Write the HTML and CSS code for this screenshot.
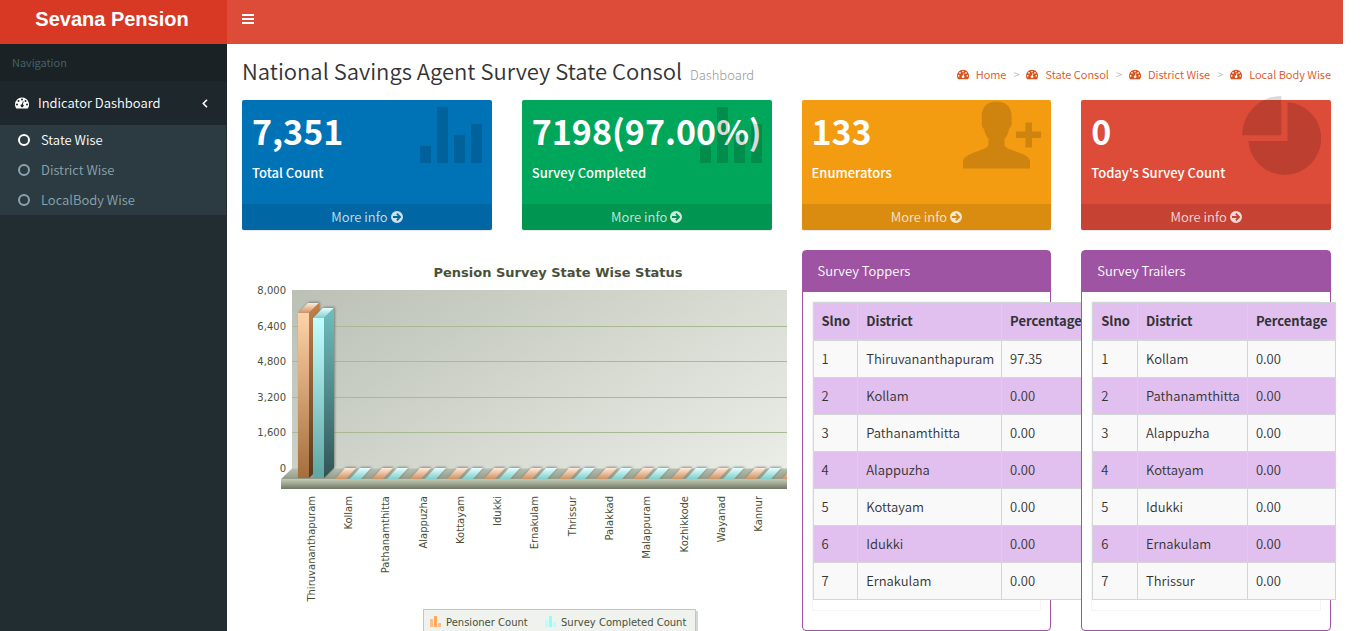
FILE: index.html
```html
<!DOCTYPE html>
<html lang="en">
<head>
<meta charset="utf-8">
<title>Sevana Pension</title>
<link rel="stylesheet" href="styles.css">
</head>
<body>
<svg class="defs" width="0" height="0" aria-hidden="true">
  <symbol id="gauge" viewBox="0 0 14 12"><path fill-rule="evenodd" d="M7 .5a7 7 0 0 0-7 7c0 1.400.4 2.700 1.100 3.800.1.200.2.200.4.200h11c.2 0 .3 0 .4-.2A7 7 0 0 0 7 .5zM2 6.500a1 1 0 1 1 0 2 1 1 0 0 1 0-2zM3.500 3a1 1 0 1 1 0 2 1 1 0 0 1 0-2zM7 1.500a1 1 0 1 1 0 2 1 1 0 0 1 0-2zM10.500 3a1 1 0 1 1 0 2 1 1 0 0 1 0-2zM12 6.500a1 1 0 1 1 0 2 1 1 0 0 1 0-2zM7.900 4.200l.8.2-.8 3a1.500 1.500 0 1 1-.9-.2z"/></symbol>
  <symbol id="ring" viewBox="0 0 12 12"><circle cx="6" cy="6" r="5" fill="none" stroke="currentColor" stroke-width="2"/></symbol>
  <symbol id="go" viewBox="0 0 12 12"><path fill-rule="evenodd" d="M6 0a6 6 0 1 1 0 12A6 6 0 0 1 6 0zM5.200 3.200l1.700 1.800H2v2h4.900L5.200 8.800l1.300 1.200L10.300 6 6.500 2z"/></symbol>
  <symbol id="bars" viewBox="0 0 62 56"><path d="M0 39h11v17H0zM17 0h11v56H17zM34 28h11v28H34zM51 17h11v39H51z"/></symbol>
</svg>

<header class="topbar">
  <a class="brand" href="#">Sevana Pension</a>
  <button class="toggle" type="button" aria-label="Toggle navigation"><svg width="12" height="10" viewBox="0 0 12 10"><path d="M0 0h12v2H0zM0 4h12v2H0zM0 8h12v2H0z"/></svg></button>
</header>

<div class="shell">
  <nav class="sidebar">
    <div class="nav-title">Navigation</div>
    <a class="nav-parent" href="#"><svg width="14" height="12"><use href="#gauge"/></svg><span>Indicator Dashboard</span><svg class="chevron" width="6" height="9" viewBox="0 0 6 9"><path d="M5 .7L1.300 4.500 5 8.300" fill="none" stroke="currentColor" stroke-width="1.600"/></svg></a>
    <ul class="nav-list">
      <li><a class="current" href="#"><svg width="12" height="12"><use href="#ring"/></svg>State Wise</a></li>
      <li><a href="#"><svg width="12" height="12"><use href="#ring"/></svg>District Wise</a></li>
      <li><a href="#"><svg width="12" height="12"><use href="#ring"/></svg>LocalBody Wise</a></li>
    </ul>
  </nav>

  <main class="content">
    <div class="heading">
      <h1>National Savings Agent Survey State Consol <small>Dashboard</small></h1>
      <ol class="crumbs">
        <li><a href="#"><svg width="12" height="11"><use href="#gauge"/></svg>Home</a></li>
        <li><a href="#"><svg width="12" height="11"><use href="#gauge"/></svg>State Consol</a></li>
        <li><a href="#"><svg width="12" height="11"><use href="#gauge"/></svg>District Wise</a></li>
        <li><a href="#"><svg width="12" height="11"><use href="#gauge"/></svg>Local Body Wise</a></li>
      </ol>
    </div>

    <div class="grid">
      <section class="tile blue">
        <div class="tile-body"><h3>7,351</h3><p>Total Count</p></div>
        <svg class="tile-icon" width="62" height="56"><use href="#bars"/></svg>
        <a href="#">More info <svg width="12" height="12"><use href="#go"/></svg></a>
      </section>
      <section class="tile green">
        <div class="tile-body"><h3>7198(97.00%)</h3><p>Survey Completed</p></div>
        <svg class="tile-icon" width="62" height="56"><use href="#bars"/></svg>
        <a href="#">More info <svg width="12" height="12"><use href="#go"/></svg></a>
      </section>
      <section class="tile orange">
        <div class="tile-body"><h3>133</h3><p>Enumerators</p></div>
        <svg class="tile-icon person" width="78" height="68" viewBox="0 0 78 68"><path d="M0 67.500V60c1-4 5-6 11-8.500 8-3 14-4.500 14.500-7.500v-6c-2.500-3-4-6.500-4.500-10-2-1.500-2.500-4-2.500-6 0-1 .5-1.500.5-2C17 6 24 .5 33.500.5S50 6 48.500 20c1 3 0 6-2.500 8-.5 4-2 7.500-4.500 10v6c.5 3 6 4.500 14 7.500 7 2.500 11 4.500 11.500 8.500v7.500zM53 30.500V37h9.500v9.500H69V37h9v-6.500h-9V21.500h-6.500v9z"/></svg>
        <a href="#">More info <svg width="12" height="12"><use href="#go"/></svg></a>
      </section>
      <section class="tile red">
        <div class="tile-body"><h3>0</h3><p>Today's Survey Count</p></div>
        <svg class="tile-icon pie" width="79" height="79" viewBox="0 0 79 79"><path d="M0 39.200A39 39 0 0 1 39.300 0v39.200zM45.500 6A36.500 36.500 0 1 1 6.300 45h39.200z"/></svg>
        <a href="#">More info <svg width="12" height="12"><use href="#go"/></svg></a>
      </section>

      <figure class="chart">
        <svg width="600" height="396" viewBox="242 250 600 396" role="img" aria-label="Pension Survey State Wise Status">
          <defs>
            <linearGradient id="wall" gradientUnits="userSpaceOnUse" x1="330" y1="260" x2="610" y2="700"><stop offset="0" stop-color="#bac0b5"/><stop offset="1" stop-color="#f6f8f2"/></linearGradient>
            <linearGradient id="floor" x1="0" y1="0" x2="0" y2="1"><stop offset="0" stop-color="#b9bfb1"/><stop offset="1" stop-color="#939b86"/></linearGradient>
            <linearGradient id="slab" x1="0" y1="0" x2="0" y2="1"><stop offset="0" stop-color="#c5cbb9"/><stop offset=".5" stop-color="#9ca38e"/><stop offset="1" stop-color="#6f7662"/></linearGradient>
            <linearGradient id="o-front" x1="0" y1="0" x2="0" y2="1"><stop offset="0" stop-color="#ffd2a8"/><stop offset="1" stop-color="#a56d3b"/></linearGradient>
            <linearGradient id="o-side" x1="0" y1="0" x2="0" y2="1"><stop offset="0" stop-color="#c1814a"/><stop offset="1" stop-color="#563a22"/></linearGradient>
            <linearGradient id="o-top" x1="0" y1="0" x2="0" y2="1"><stop offset="0" stop-color="#ffeadb"/><stop offset="1" stop-color="#cf9262"/></linearGradient>
            <linearGradient id="t-front" x1="0" y1="0" x2="0" y2="1"><stop offset="0" stop-color="#c2ffff"/><stop offset="1" stop-color="#5ea6a3"/></linearGradient>
            <linearGradient id="t-side" x1="0" y1="0" x2="0" y2="1"><stop offset="0" stop-color="#6fbfbe"/><stop offset="1" stop-color="#315455"/></linearGradient>
            <linearGradient id="t-top" x1="0" y1="0" x2="0" y2="1"><stop offset="0" stop-color="#e6ffff"/><stop offset="1" stop-color="#7fcfcc"/></linearGradient>
            <filter id="soft" x="-20%" y="-20%" width="140%" height="140%"><feDropShadow dx="1" dy="-1" stdDeviation="1" flood-color="#555" flood-opacity=".6"/></filter>
            <g id="flat" filter="url(#soft)"><path d="M335 479l10-11h11l-10 11z" fill="url(#o-top)"/><path d="M350 479l10-11h11l-10 11z" fill="url(#t-top)"/></g>
          </defs>
          <text class="chart-title" x="558" y="277">Pension Survey State Wise Status</text>
          <path d="M292 290h550v179H292z" fill="url(#wall)"/>
          <path d="M292 326.500h550M292 361.500h550M292 397.500h550M292 432.500h550" stroke="#a9b995" fill="none"/>
          <path d="M292 468.500h550V479H281z" fill="url(#floor)"/>
          <path d="M281 479h561v10H281z" fill="url(#slab)"/>
          <g filter="url(#soft)">
            <path d="M298 313l10-10h11l-10 10z" fill="url(#o-top)"/><path d="M309 313l10-10v165l-10 10z" fill="url(#o-side)"/><path d="M298 313h11v165h-11z" fill="url(#o-front)"/>
          </g>
          <g filter="url(#soft)">
            <path d="M313 318l10-10h11l-10 10z" fill="url(#t-top)"/><path d="M324 318l10-10v160l-10 10z" fill="url(#t-side)"/><path d="M313 318h11v160h-11z" fill="url(#t-front)"/>
          </g>
          <use href="#flat"/><use href="#flat" x="37"/><use href="#flat" x="75"/><use href="#flat" x="112"/><use href="#flat" x="149"/><use href="#flat" x="186"/><use href="#flat" x="224"/><use href="#flat" x="261"/><use href="#flat" x="298"/><use href="#flat" x="336"/><use href="#flat" x="373"/><use href="#flat" x="410"/><use href="#flat" x="447"/>
          <g class="chart-end">
            <text x="286" y="294">8,000</text><text x="286" y="330">6,400</text><text x="286" y="365">4,800</text><text x="286" y="401">3,200</text><text x="286" y="436">1,600</text><text x="286" y="472">0</text>
            <text transform="translate(315 496) rotate(-90)">Thiruvananthapuram</text>
            <text transform="translate(352 496) rotate(-90)">Kollam</text>
            <text transform="translate(389 496) rotate(-90)">Pathanamthitta</text>
            <text transform="translate(427 496) rotate(-90)">Alappuzha</text>
            <text transform="translate(464 496) rotate(-90)">Kottayam</text>
            <text transform="translate(501 496) rotate(-90)">Idukki</text>
            <text transform="translate(538 496) rotate(-90)">Ernakulam</text>
            <text transform="translate(576 496) rotate(-90)">Thrissur</text>
            <text transform="translate(613 496) rotate(-90)">Palakkad</text>
            <text transform="translate(650 496) rotate(-90)">Malappuram</text>
            <text transform="translate(688 496) rotate(-90)">Kozhikkode</text>
            <text transform="translate(725 496) rotate(-90)">Wayanad</text>
            <text transform="translate(762 496) rotate(-90)">Kannur</text>
          </g>
          <path d="M425 611h273v30H425z" fill="#d5d7d2"/>
          <path d="M423.500 609.500h272v30h-272z" fill="#eff2ed" stroke="#c3c8b6"/>
          <path d="M430 619h3v8h-3zM438 623h3v4h-3z" fill="#ffbd85"/><path d="M434 616h3v11h-3z" fill="#ffa85e"/>
          <path d="M545 620h3v7h-3zM553 622h3v5h-3z" fill="#b4ffff"/><path d="M549 616h3v11h-3z" fill="#8cffff"/>
          <text x="446" y="626">Pensioner Count</text><text x="561" y="626">Survey Completed Count</text>
        </svg>
      </figure>

      <section class="panel">
        <h2>Survey Toppers</h2>
        <div class="panel-body"><div class="frame">
          <table>
            <thead><tr><th>Slno</th><th>District</th><th>Percentage</th></tr></thead>
            <tbody>
              <tr><td>1</td><td>Thiruvananthapuram</td><td>97.35</td></tr>
              <tr><td>2</td><td>Kollam</td><td>0.00</td></tr>
              <tr><td>3</td><td>Pathanamthitta</td><td>0.00</td></tr>
              <tr><td>4</td><td>Alappuzha</td><td>0.00</td></tr>
              <tr><td>5</td><td>Kottayam</td><td>0.00</td></tr>
              <tr><td>6</td><td>Idukki</td><td>0.00</td></tr>
              <tr><td>7</td><td>Ernakulam</td><td>0.00</td></tr>
            </tbody>
          </table>
        </div></div>
      </section>

      <section class="panel">
        <h2>Survey Trailers</h2>
        <div class="panel-body"><div class="frame">
          <table>
            <thead><tr><th>Slno</th><th>District</th><th>Percentage</th></tr></thead>
            <tbody>
              <tr><td>1</td><td>Kollam</td><td>0.00</td></tr>
              <tr><td>2</td><td>Pathanamthitta</td><td>0.00</td></tr>
              <tr><td>3</td><td>Alappuzha</td><td>0.00</td></tr>
              <tr><td>4</td><td>Kottayam</td><td>0.00</td></tr>
              <tr><td>5</td><td>Idukki</td><td>0.00</td></tr>
              <tr><td>6</td><td>Ernakulam</td><td>0.00</td></tr>
              <tr><td>7</td><td>Thrissur</td><td>0.00</td></tr>
            </tbody>
          </table>
        </div></div>
      </section>
    </div>
  </main>
</div>
</body>
</html>
```
FILE: styles.css
```css
* { box-sizing: border-box; }
html { height: 100%; overflow: hidden; }
body {
  margin: 0;
  height: 100%;
  overflow: hidden;
  display: flex;
  flex-direction: column;
  background: #fff;
  color: #333;
  font: 350 13px/20px "Noto Sans CJK SC", "Open Sans", sans-serif;
}
a { color: inherit; text-decoration: none; }
svg { fill: currentColor; }
ul, ol { list-style: none; margin: 0; padding: 0; }
h1, h2, h3, p, figure { margin: 0; font-weight: 350; }
.defs { position: absolute; }

.topbar {
  flex: none;
  display: flex;
  height: 44px;
  margin-right: 19px;
  background: #dd4b39;
  color: #fff;
}
.brand {
  width: 227px;
  padding: 7px 3px 0 0;
  background: #d73925;
  font: bold 20px/24px "Liberation Sans", Arial, sans-serif;
  text-align: center;
}
.toggle {
  display: flex;
  align-items: center;
  padding: 0 15px 6px;
  border: 0;
  background: none;
  color: inherit;
}

.shell { flex: 1; min-height: 0; display: flex; }
.sidebar { flex: none; width: 227px; background: #222d32; }
.nav-title {
  padding: 8px 12px 9px;
  background: #1a2226;
  color: #4b646f;
  font-size: 11px;
}
.nav-parent {
  display: flex;
  align-items: center;
  gap: 9px;
  padding: 12px 19px 12px 15px;
  background: #1e282c;
  color: #fff;
}
.chevron { margin-left: auto; }
.nav-list { margin-right: 1px; background: #2c3b41; }
.nav-list a {
  display: flex;
  align-items: center;
  gap: 11px;
  padding: 5px 18px;
  color: #8aa4af;
}
.nav-list .current { color: #fff; }

.content { flex: 1; min-width: 0; padding: 14px 31px 0 15px; }
.heading {
  display: flex;
  justify-content: space-between;
  align-items: center;
  height: 28px;
  margin-bottom: 14px;
  white-space: nowrap;
}
h1 { font-size: 22px; line-height: 28px; }
h1 small { margin-left: 3px; color: #999; font-size: 13px; font-weight: 300; }
.crumbs { display: flex; padding-top: 4px; font-size: 11px; color: #d9531e; }
.crumbs a { display: flex; align-items: center; gap: 7px; }
.crumbs li { display: flex; }
.crumbs li + li::before { content: ">"; padding: 0 7px; color: #bbb; }

.grid {
  display: grid;
  grid-template-columns: repeat(4, minmax(0, 1fr));
  gap: 20px 30px;
  align-items: start;
}
.tile {
  position: relative;
  border-radius: 2px;
  color: #fff;
  box-shadow: 0 1px 1px rgba(0, 0, 0, .1);
}
.tile-body { height: 104px; padding: 9px 10px; }
.tile h3 { margin-bottom: 10px; font-size: 34px; line-height: 44px; font-weight: 700; white-space: nowrap; }
.tile p { font-weight: 500; }
.tile-icon { position: absolute; top: 7px; right: 10px; color: rgba(0, 0, 0, .15); }
.tile-icon.person { top: 1px; }
.tile-icon.pie { top: -4px; }
.tile > a {
  display: flex;
  justify-content: center;
  align-items: center;
  gap: 3px;
  height: 26px;
  background: rgba(0, 0, 0, .1);
  color: rgba(255, 255, 255, .8);
}
.blue { background: #0073b7; }
.green { background: #00a65a; }
.orange { background: #f39c12; }
.red { background: #dd4b39; }

.chart { grid-column: span 2; margin-right: -15px; overflow: hidden; }
.chart svg { display: block; }
.chart text { fill: #4a5038; font: 10px "DejaVu Sans", Verdana, sans-serif; }
.chart .chart-title { font-size: 13px; font-weight: 700; text-anchor: middle; }
.chart-end { text-anchor: end; }

.panel {
  position: relative;
  border: 1px solid #9e54a3;
  border-radius: 4px;
  background: #fff;
}
.panel h2 {
  padding: 10px 15px 11px;
  background: #9e54a3;
  color: #fff;
  font-size: 13px;
  line-height: 20px;
}
.panel-body { padding: 9px 9px 19px; }
.frame { border: 1px solid #f4f4f4; padding-bottom: 10px; }
table { border-collapse: collapse; min-width: 100%; white-space: nowrap; }
th, td { padding: 8px 7px 8px 8px; border: 1px solid #d2d6d6; text-align: left; }
th { border-bottom-width: 2px; background: #e1bfee; font-weight: 700; }
td { background: #f9f9f9; }
tbody tr:nth-child(even) td { background: #e1bfee; }
```
